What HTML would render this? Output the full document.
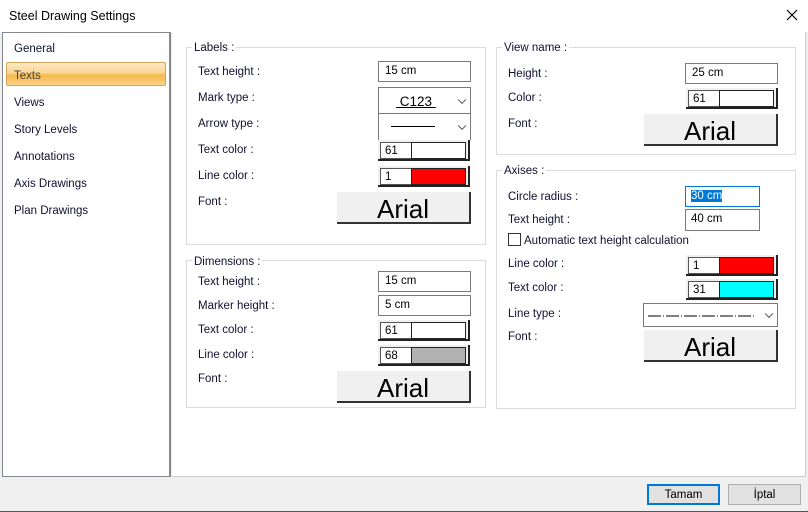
<!DOCTYPE html>
<html><head><style>
*{margin:0;padding:0;box-sizing:border-box}
body{width:808px;height:512px;background:#f0f0f0;font-family:"Liberation Sans",sans-serif;font-size:11.5px;color:#101030;position:relative;overflow:hidden}
.a{position:absolute}
.t{position:absolute;white-space:nowrap;line-height:14px;margin-top:1px}
.grp{position:absolute;border:1px solid #dcdcdc}
.leg{position:absolute;background:#fff;padding:0 2px;line-height:14px;color:#101030;margin-top:1px}
.in{position:absolute;border:1px solid #7a7a7a;background:#fff;padding-left:6px;line-height:19px;color:#000}
.cw{position:absolute;width:92px;height:21px;border-right:2px solid #222;border-bottom:2px solid #222;background:#f0f0f0}
.cw .n{position:absolute;left:2px;top:2px;width:32px;height:17px;border:1px solid #555;border-right:none;background:#fff;padding-left:4px;line-height:16px;color:#000}
.cw .s{position:absolute;left:33px;top:2px;width:55px;height:17px;border:1px solid #222}
.fb{position:absolute;width:134px;height:32px;background:#f0f0f0;border-right:2px solid #333;border-bottom:2px solid #333;font-size:26px;color:#000;text-align:center;line-height:34px}
.cb{position:absolute;border:1px solid #7a7a7a;background:#fff}
.chev{position:absolute;right:5px;top:50%;width:6px;height:6px;border-right:1px solid #555;border-bottom:1px solid #555;transform:translateY(-70%) rotate(45deg)}
</style></head><body>
<div class="a" style="left:0;top:0;width:808px;height:32px;background:#fff"></div>
<div class="t" style="left:9px;top:8px;font-size:12.5px;color:#000">Steel Drawing Settings</div>
<svg class="a" style="left:786px;top:9px" width="12" height="12"><path d="M1 1L11 11M11 1L1 11" stroke="#000" stroke-width="1.2"/></svg>
<div class="a" style="left:0;top:511px;width:808px;height:1px;background:#555"></div>
<div class="a" style="left:172px;top:32px;width:634px;height:445px;background:#fff;border-right:1px solid #ccc;border-bottom:1px solid #ccc"></div>
<div class="a" style="left:2px;top:32px;width:169px;height:445px;background:#fff;border:1px solid #828790;border-right:2px solid #888"></div>
<div class="a" style="left:6px;top:62px;width:160px;height:24px;border:1px solid #d6a55a;border-radius:2px;background:linear-gradient(#fde8c4 0%,#fbd695 45%,#f6b94a 55%,#fad089 100%)"></div>
<div class="t" style="left:14px;top:41px">General</div>
<div class="t" style="left:14px;top:68px;color:#444">Texts</div>
<div class="t" style="left:14px;top:95px">Views</div>
<div class="t" style="left:14px;top:122px">Story Levels</div>
<div class="t" style="left:14px;top:149px">Annotations</div>
<div class="t" style="left:14px;top:176px">Axis Drawings</div>
<div class="t" style="left:14px;top:203px">Plan Drawings</div>

<!-- Labels -->
<div class="grp" style="left:186px;top:47px;width:300px;height:198px"></div>
<div class="leg" style="left:192px;top:40px">Labels :</div>
<div class="t" style="left:198px;top:64px">Text height :</div>
<div class="t" style="left:198px;top:90px">Mark type :</div>
<div class="t" style="left:198px;top:116px">Arrow type :</div>
<div class="t" style="left:198px;top:142px">Text color :</div>
<div class="t" style="left:198px;top:168px">Line color :</div>
<div class="t" style="left:198px;top:194px">Font :</div>
<div class="in" style="left:378px;top:61px;width:93px;height:21px">15 cm</div>
<div class="cb" style="left:378px;top:87px;width:93px;height:27px"><div class="t" style="left:17px;top:6px;font-size:13.5px;color:#000;text-decoration:underline">&nbsp;C123&nbsp;</div><div class="chev"></div></div>
<div class="cb" style="left:378px;top:113px;width:93px;height:27px;border-bottom:none"><div class="a" style="left:12px;top:12px;width:44px;height:1px;background:#000"></div><div class="chev"></div></div>
<div class="cw" style="left:378px;top:140px"><div class="n">61</div><div class="s" style="background:#fff"></div></div>
<div class="cw" style="left:378px;top:166px"><div class="n">1</div><div class="s" style="background:#f00"></div></div>
<div class="fb" style="left:337px;top:192px">Arial</div>

<!-- Dimensions -->
<div class="grp" style="left:186px;top:260px;width:300px;height:148px"></div>
<div class="leg" style="left:192px;top:254px">Dimensions :</div>
<div class="t" style="left:198px;top:274px">Text height :</div>
<div class="t" style="left:198px;top:298px">Marker height :</div>
<div class="t" style="left:198px;top:322px">Text color :</div>
<div class="t" style="left:198px;top:347px">Line color :</div>
<div class="t" style="left:198px;top:371px">Font :</div>
<div class="in" style="left:378px;top:271px;width:93px;height:21px">15 cm</div>
<div class="in" style="left:378px;top:295px;width:93px;height:21px">5 cm</div>
<div class="cw" style="left:378px;top:320px"><div class="n">61</div><div class="s" style="background:#fff"></div></div>
<div class="cw" style="left:378px;top:345px"><div class="n">68</div><div class="s" style="background:#b2b2b2"></div></div>
<div class="fb" style="left:337px;top:371px">Arial</div>

<!-- View name -->
<div class="grp" style="left:496px;top:47px;width:300px;height:108px"></div>
<div class="leg" style="left:502px;top:40px">View name :</div>
<div class="t" style="left:508px;top:66px">Height :</div>
<div class="t" style="left:508px;top:90px">Color :</div>
<div class="t" style="left:508px;top:116px">Font :</div>
<div class="in" style="left:685px;top:63px;width:93px;height:21px">25 cm</div>
<div class="cw" style="left:686px;top:88px"><div class="n">61</div><div class="s" style="background:#fff"></div></div>
<div class="fb" style="left:644px;top:114px">Arial</div>

<!-- Axises -->
<div class="grp" style="left:496px;top:170px;width:300px;height:239px"></div>
<div class="leg" style="left:502px;top:163px">Axises :</div>
<div class="t" style="left:508px;top:189px">Circle radius :</div>
<div class="t" style="left:508px;top:212px">Text height :</div>
<div class="a" style="left:508px;top:233px;width:13px;height:13px;border:1px solid #333;background:#fff"></div>
<div class="t" style="left:524px;top:233px">Automatic text height calculation</div>
<div class="t" style="left:508px;top:256px">Line color :</div>
<div class="t" style="left:508px;top:280px">Text color :</div>
<div class="t" style="left:508px;top:306px">Line type :</div>
<div class="t" style="left:508px;top:329px">Font :</div>
<div class="in" style="left:685px;top:186px;width:75px;height:21px;border-color:#0078d7;padding-left:5px"><span style="background:#0078d7;color:#fff">30 cm</span></div>
<div class="in" style="left:685px;top:209px;width:75px;height:22px;padding-left:5px">40 cm</div>
<div class="cw" style="left:686px;top:255px"><div class="n">1</div><div class="s" style="background:#f00"></div></div>
<div class="cw" style="left:686px;top:279px"><div class="n">31</div><div class="s" style="background:#0ff"></div></div>
<div class="cb" style="left:643px;top:303px;width:135px;height:24px"><svg class="a" style="left:4px;top:11px" width="110" height="2"><line x1="0" y1="1" x2="108" y2="1" stroke="#000" stroke-width="1" stroke-dasharray="13 2 1 2"/></svg><div class="chev"></div></div>
<div class="fb" style="left:644px;top:330px">Arial</div>

<!-- Buttons -->
<div class="a" style="left:647px;top:484px;width:73px;height:21px;border:2px solid #0078d7;background:#e1e1e1;text-align:center;line-height:18px;color:#000">Tamam</div>
<div class="a" style="left:728px;top:484px;width:73px;height:21px;border:1px solid #adadad;background:#e1e1e1;text-align:center;line-height:20px;color:#000">İptal</div>
</body></html>
